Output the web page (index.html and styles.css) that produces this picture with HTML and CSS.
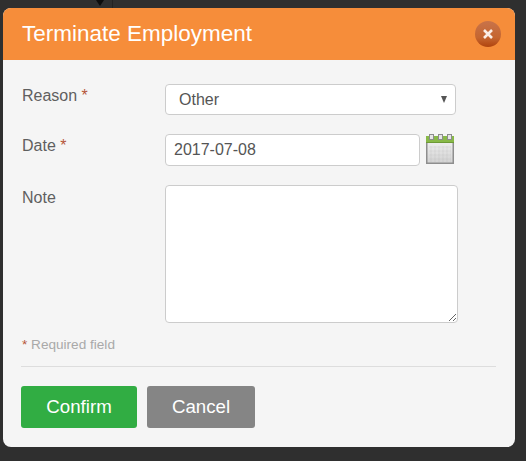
FILE: index.html
```html
<!DOCTYPE html>
<html lang="en">
<head>
    <meta charset="UTF-8">
    <title>Terminate Employment</title>
    <link rel="stylesheet" href="styles.css">
</head>
<body>
    <div class="backdrop-top">
        <span class="caret"></span>
    </div>
    <div class="modal">
        <div class="modal-head">
            <h1>Terminate Employment</h1>
            <a class="close" href="#">
                <svg width="12" height="10" viewBox="0 0 12 10">
                    <path d="M2 1 L10 9 M10 1 L2 9" stroke="#fbeee6" stroke-width="2.6" fill="none"/>
                </svg>
            </a>
        </div>
        <form class="modal-body">
            <div class="row row-reason">
                <label for="reason">Reason <em>*</em></label>
                <div class="select-wrap">
                    <select id="reason">
                        <option>Other</option>
                    </select>
                </div>
            </div>
            <div class="row row-date">
                <label for="date">Date <em>*</em></label>
                <input type="text" id="date" value="2017-07-08">
                <svg class="calendar" width="28" height="30" viewBox="0 0 28 30">
                    <defs>
                        <linearGradient id="page" x1="0" y1="0" x2="0" y2="1">
                            <stop offset="0" stop-color="#f4f4f4"/>
                            <stop offset="1" stop-color="#d2d2d2"/>
                        </linearGradient>
                        <pattern id="grid" width="4" height="4" patternUnits="userSpaceOnUse">
                            <rect x="0" y="0" width="2" height="4" fill="#000" opacity="0.025"/>
                            <rect x="0" y="0" width="4" height="2" fill="#000" opacity="0.02"/>
                        </pattern>
                    </defs>
                    <rect x="0.75" y="3" width="26.5" height="26.25" fill="url(#page)" stroke="#8e8e8e" stroke-width="1.5"/>
                    <rect x="3" y="12" width="22" height="16" fill="url(#grid)"/>
                    <rect x="0" y="2" width="28" height="7" fill="#88b948"/>
                    <rect x="0" y="8" width="28" height="1" fill="#6d9a36"/>
                    <rect x="3.5" y="0.5" width="4" height="5" fill="#e6e6e6" stroke="#8c8c8c"/>
                    <rect x="12.5" y="0.5" width="4" height="5" fill="#e6e6e6" stroke="#8c8c8c"/>
                    <rect x="21.5" y="0.5" width="4" height="5" fill="#e6e6e6" stroke="#8c8c8c"/>
                </svg>
            </div>
            <div class="row row-note">
                <label for="note">Note</label>
                <textarea id="note"></textarea>
            </div>
            <p class="required"><em>*</em> Required field</p>
            <hr>
            <div class="actions">
                <button type="button" class="btn btn-confirm">Confirm</button>
                <button type="button" class="btn btn-cancel">Cancel</button>
            </div>
        </form>
    </div>
</body>
</html>
```

FILE: styles.css
```css
* {
    box-sizing: border-box;
}
body {
    font-family: "Liberation Sans", Arial, sans-serif;
    background-color: #2f2f2f;
    margin: 0;
    padding: 0;
    height: 461px;
    overflow: hidden;
}
.backdrop-top {
    height: 8px;
    width: 113px;
    border-right: 1px solid #232323;
    display: flex;
    justify-content: flex-end;
    padding-right: 8px;
}
.caret {
    width: 0;
    height: 0;
    border-left: 4px solid transparent;
    border-right: 4px solid transparent;
    border-top: 6px solid #0c0c0c;
}
.modal {
    width: 512px;
    height: 439px;
    margin-left: 3px;
    background-color: #f5f5f5;
    border-radius: 8px;
    overflow: hidden;
}
.modal-head {
    height: 52px;
    background-color: #f68d3a;
    display: flex;
    align-items: center;
    justify-content: space-between;
    padding: 0 14px 0 19px;
}
.modal-head h1 {
    margin: 0;
    font-size: 22.5px;
    font-weight: normal;
    color: #fff;
}
.close {
    width: 26px;
    height: 26px;
    border-radius: 50%;
    background: linear-gradient(#c8734a, #c5652f 65%, #b0430d);
    display: flex;
    align-items: center;
    justify-content: center;
}
.modal-body {
    padding: 24px 19px 0 18px;
}
.row {
    display: flex;
    align-items: flex-start;
}
.row label {
    width: 144px;
    flex: none;
    padding: 1px 0 0 1px;
    font-size: 16px;
    color: #5f5f5f;
    line-height: 22px;
}
.row-note label {
    padding-top: 2px;
}
em {
    font-style: normal;
    color: #b5563a;
}
.row-reason {
    height: 50px;
}
.row-date {
    height: 51px;
}
.select-wrap {
    position: relative;
    width: 291px;
}
.select-wrap::after {
    content: "";
    position: absolute;
    right: 9px;
    top: 12px;
    border-left: 3.5px solid transparent;
    border-right: 3.5px solid transparent;
    border-top: 7px solid #555;
}
select, input, textarea {
    display: block;
    background-color: #fff;
    border: 1px solid #ccc;
    border-radius: 4px;
    font-family: "Liberation Sans", Arial, sans-serif;
    font-size: 16px;
    color: #555;
    outline: none;
}
select {
    width: 100%;
    height: 31px;
    padding: 0 13px;
    appearance: none;
}
input {
    width: 255px;
    height: 32px;
    padding: 0 8px;
}
.calendar {
    margin-left: 6px;
}
textarea {
    width: 293px;
    height: 138px;
}
.required {
    margin: 13px 0 0 1px;
    font-size: 13.6px;
    line-height: 17px;
    color: #a9a9a9;
}
hr {
    margin: 13px 0 19px;
    border: 0;
    border-top: 1px solid #ddd;
}
.actions {
    display: flex;
    gap: 10px;
}
.btn {
    height: 42px;
    border: 0;
    border-radius: 3px;
    color: #fff;
    font-family: "Liberation Sans", Arial, sans-serif;
    font-size: 18.7px;
    cursor: pointer;
}
.btn-confirm {
    width: 116px;
    background-color: #31ad43;
}
.btn-cancel {
    width: 108px;
    background-color: #858585;
}
```
